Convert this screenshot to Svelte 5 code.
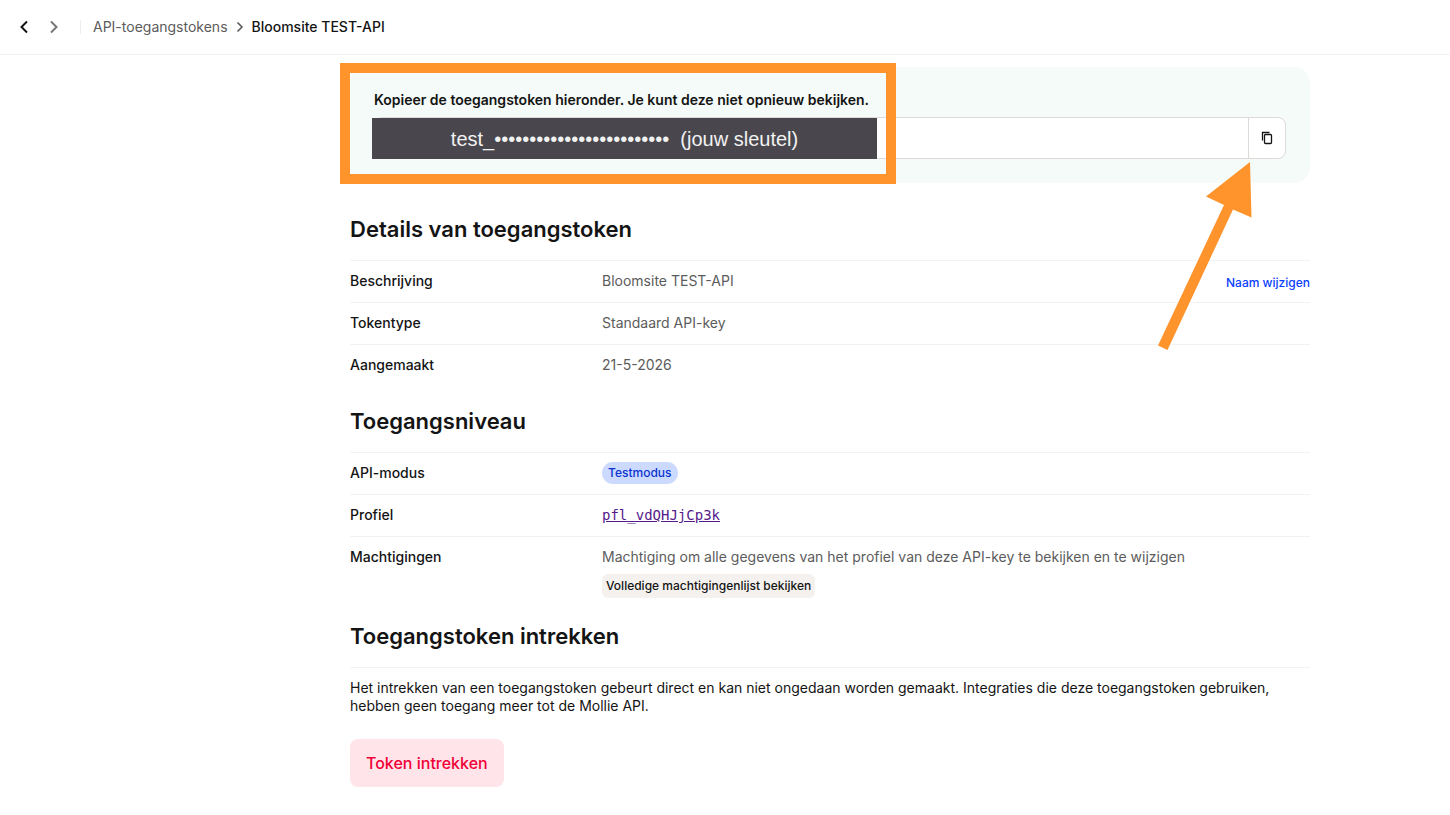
<script lang="ts">
  interface Detail {
    label: string;
    value: string;
    action?: string;
  }

  const details: Detail[] = [
    { label: 'Beschrijving', value: 'Bloomsite TEST-API', action: 'Naam wijzigen' },
    { label: 'Tokentype', value: 'Standaard API-key' },
    { label: 'Aangemaakt', value: '21-5-2026' },
  ];

  const maskedToken = 'test_' + '•'.repeat(25);
</script>

<header class="topbar">
  <button class="topbar__nav" aria-label="Vorige">
    <svg width="16" height="16" viewBox="0 0 16 16"><path d="M11 2.5 5.5 8l5.5 5.5" /></svg>
  </button>
  <button class="topbar__nav topbar__nav--muted" aria-label="Volgende">
    <svg width="16" height="16" viewBox="0 0 16 16"><path d="M5 2.5 10.5 8 5 13.5" /></svg>
  </button>
  <nav class="crumbs">
    <a class="crumbs__link" href="#tokens">API-toegangstokens</a>
    <svg class="crumbs__sep" width="8" height="12" viewBox="0 0 8 12"><path d="M1.5 1.5 6 6l-4.5 4.5" /></svg>
    <span class="crumbs__current">Bloomsite TEST-API</span>
  </nav>
</header>

<main class="page">
  <div class="content">
    <div class="panel">
      <label class="panel__label" for="token">Kopieer de toegangstoken hieronder. Je kunt deze niet opnieuw bekijken.</label>
      <div class="field">
        <input id="token" class="field__input" type="text" readonly />
        <button class="field__copy" aria-label="Kopiëren">
          <svg width="12" height="14" viewBox="0 0 12 14">
            <path d="M1.5 9.5v-8h7" />
            <rect x="3.5" y="3.5" width="7" height="9" rx="1" />
          </svg>
        </button>
      </div>

      <div class="mask">{maskedToken}&nbsp; (jouw sleutel)</div>
      <div class="highlight"></div>
      <svg class="arrow" width="94" height="188" viewBox="0 0 94 188">
        <path d="M92 0 48 34.5l18 8.5L0 183.5l9.5 4.5L75 47.5l18.5 8z" />
      </svg>
    </div>

    <section class="section section--first">
      <h2 class="section__title">Details van toegangstoken</h2>
      <dl class="rows">
        {#each details as row (row.label)}
          <div class="row">
            <dt>{row.label}</dt>
            <dd>{row.value}</dd>
            {#if row.action}
              <dd class="row__action"><button class="link-btn">{row.action}</button></dd>
            {/if}
          </div>
        {/each}
      </dl>
    </section>

    <section class="section">
      <h2 class="section__title">Toegangsniveau</h2>
      <dl class="rows">
        <div class="row">
          <dt>API-modus</dt>
          <dd><span class="badge">Testmodus</span></dd>
        </div>
        <div class="row">
          <dt>Profiel</dt>
          <dd><a class="profile" href="#profile">pfl_vdQHJjCp3k</a></dd>
        </div>
        <div class="row">
          <dt>Machtigingen</dt>
          <dd>
            Machtiging om alle gegevens van het profiel van deze API-key te bekijken en te wijzigen
            <button class="small-btn">Volledige machtigingenlijst bekijken</button>
          </dd>
        </div>
      </dl>
    </section>

    <section class="section">
      <h2 class="section__title">Toegangstoken intrekken</h2>
      <div class="revoke">
        <p>
          Het intrekken van een toegangstoken gebeurt direct en kan niet ongedaan worden gemaakt. Integraties die deze
          toegangstoken gebruiken, hebben geen toegang meer tot de Mollie API.
        </p>
        <button class="danger-btn">Token intrekken</button>
      </div>
    </section>
  </div>
</main>

<style>
  :global(body) {
    background: #fff;
    color: #141414;
    font-family: Inter, 'Liberation Sans', sans-serif;
    font-size: 14px;
    line-height: 18px;
  }

  button {
    border: none;
    background: transparent;
    font-family: inherit;
    cursor: pointer;
  }

  .topbar {
    display: flex;
    align-items: center;
    gap: 14px;
    height: 54px;
    padding: 0 16px;
    border-bottom: 1px solid #f2f2f2;
  }

  .topbar__nav {
    display: flex;
    padding: 0;
    color: #141414;
  }

  .topbar__nav--muted {
    color: #777;
  }

  .topbar svg {
    fill: none;
    stroke: currentColor;
    stroke-width: 2;
  }

  .crumbs {
    display: flex;
    align-items: center;
    gap: 8px;
    height: 14px;
    margin-left: 4px;
    padding-left: 12px;
    border-left: 1px solid #f0eeec;
  }

  .crumbs__link {
    color: #5c5c5c;
    text-decoration: none;
  }

  .topbar .crumbs__sep {
    color: #555;
    stroke-width: 1.5;
  }

  .crumbs__current {
    font-weight: 500;
  }

  .page {
    padding: 12px 24px 28px 234px;
  }

  .content {
    max-width: 960px;
    margin: 0 auto;
  }

  .panel {
    position: relative;
    padding: 24px;
    border-radius: 16px;
    background: #f5fbf8;
  }

  .panel__label {
    display: block;
    margin-bottom: 8px;
    font-weight: 600;
  }

  .field {
    display: flex;
    box-sizing: border-box;
    height: 42px;
    border: 1px solid #dedad8;
    border-radius: 8px;
    background: #fff;
    overflow: hidden;
  }

  .field__input {
    flex: 1;
    min-width: 0;
    padding: 0 12px;
    border: none;
    background: transparent;
    font: inherit;
  }

  .field__copy {
    display: flex;
    align-items: center;
    justify-content: center;
    width: 37px;
    padding: 0;
    border-left: 1px solid #dedad8;
  }

  .field__copy svg {
    fill: none;
    stroke: #141414;
    stroke-width: 1.3;
  }

  /* annotations on top of the panel */
  .mask {
    position: absolute;
    top: 51px;
    left: 22px;
    width: 505px;
    height: 41px;
    background: #49474d;
    color: #f2f2f2;
    font-family: 'Liberation Sans', Arial, sans-serif;
    font-size: 20px;
    line-height: 42px;
    text-align: center;
    white-space: nowrap;
  }

  .highlight {
    position: absolute;
    top: -4px;
    left: -10px;
    box-sizing: border-box;
    width: 556px;
    height: 121px;
    border: 10px solid #ff932c;
    pointer-events: none;
  }

  .arrow {
    position: absolute;
    top: 95px;
    right: 58px;
    fill: #ff932c;
    pointer-events: none;
  }

  .section {
    margin-top: 21px;
  }

  .section--first {
    margin-top: 32px;
  }

  .section__title {
    margin: 0 0 17px;
    font-size: 22px;
    font-weight: 600;
    line-height: 28px;
  }

  .rows {
    margin: 0;
  }

  .row {
    display: flex;
    box-sizing: border-box;
    min-height: 42px;
    padding: 11px 0 3px;
    border-top: 1px solid #f2f2f2;
  }

  dt {
    flex: 0 0 252px;
    font-weight: 500;
  }

  dd {
    margin: 0;
    color: #5c5c5c;
  }

  .row__action {
    margin-left: auto;
  }

  .link-btn {
    padding: 0;
    color: #0a40ff;
    font-size: 12px;
    font-weight: 500;
    line-height: 22px;
  }

  .badge {
    display: block;
    margin: -2px 0;
    padding: 0 6px;
    border-radius: 11px;
    background: #ccdaff;
    color: #0a33d0;
    font-size: 12px;
    font-weight: 500;
    line-height: 22px;
  }

  .profile {
    color: #551a8b;
    font-family: 'DejaVu Sans Mono', monospace;
  }

  .small-btn {
    display: block;
    margin-top: 8px;
    padding: 0 4px;
    border-radius: 6px;
    background: #f5f1ee;
    color: #141414;
    font-size: 12px;
    font-weight: 500;
    line-height: 24px;
  }

  .revoke {
    padding-top: 11px;
    border-top: 1px solid #f2f2f2;
  }

  .revoke p {
    margin: 0 0 24px;
  }

  .danger-btn {
    height: 48px;
    padding: 0 16px;
    border-radius: 8px;
    background: #ffe5ea;
    color: #f00037;
    font-size: 16px;
    font-weight: 500;
  }
</style>
